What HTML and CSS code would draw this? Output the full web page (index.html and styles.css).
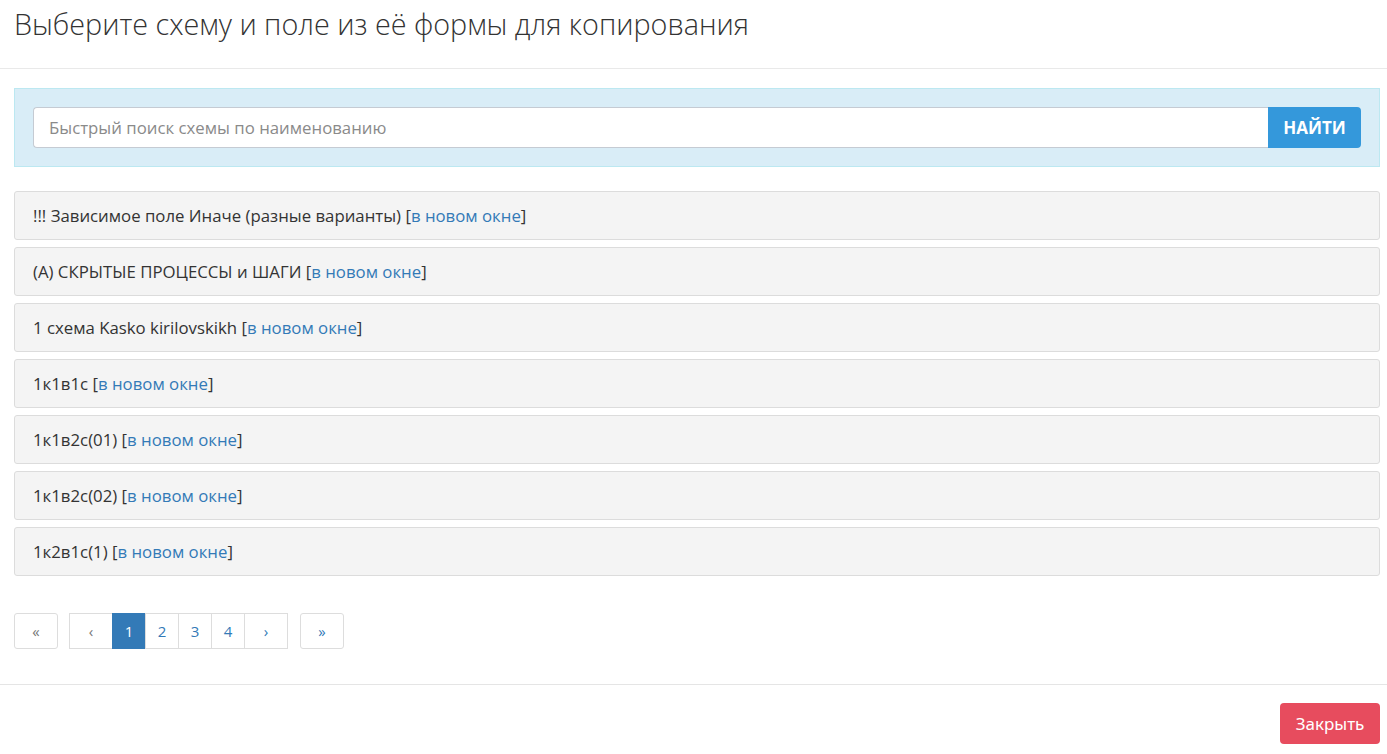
FILE: index.html
```html
<!DOCTYPE html>
<html lang="ru">
<head>
    <meta charset="UTF-8">
    <meta name="viewport" content="width=device-width, initial-scale=1.0">
    <link rel="stylesheet" href="styles.css">
    <title>Копирование поля</title>
</head>
<body>
    <div class="modal-header">
        <h3 class="modal-title">Выберите схему и поле из её формы для копирования</h3>
    </div>
    <div class="modal-body">
        <div class="search-well">
            <div class="input-group">
                <input class="search-input" type="text" placeholder="Быстрый поиск схемы по наименованию">
                <button class="search-btn">НАЙТИ</button>
            </div>
        </div>

        <div class="scheme-list">
            <div class="scheme-item">!!! Зависимое поле Иначе (разные варианты) [<a href="#">в новом окне</a>]</div>
            <div class="scheme-item">(А) СКРЫТЫЕ ПРОЦЕССЫ и ШАГИ [<a href="#">в новом окне</a>]</div>
            <div class="scheme-item">1 схема Kasko kirilovskikh [<a href="#">в новом окне</a>]</div>
            <div class="scheme-item">1к1в1с [<a href="#">в новом окне</a>]</div>
            <div class="scheme-item">1к1в2с(01) [<a href="#">в новом окне</a>]</div>
            <div class="scheme-item">1к1в2с(02) [<a href="#">в новом окне</a>]</div>
            <div class="scheme-item">1к2в1с(1) [<a href="#">в новом окне</a>]</div>
        </div>

        <div class="pager">
            <a class="page-btn single disabled wide" href="#">&laquo;</a>
            <div class="page-group">
                <a class="page-btn disabled wide" href="#">&lsaquo;</a>
                <a class="page-btn active" href="#">1</a>
                <a class="page-btn" href="#">2</a>
                <a class="page-btn" href="#">3</a>
                <a class="page-btn" href="#">4</a>
                <a class="page-btn wide" href="#">&rsaquo;</a>
            </div>
            <a class="page-btn single last wide" href="#">&raquo;</a>
        </div>
    </div>
    <div class="modal-footer">
        <button class="close-btn">Закрыть</button>
    </div>
</body>
</html>
```

FILE: styles.css
```css
body {
    margin: 0;
    padding: 0;
    font-family: 'Open Sans', 'Noto Sans', sans-serif;
    font-size: 16.8px;
    color: #333;
    background-color: #fff;
}

.modal-header {
    height: 69px;
    padding: 0 14px;
    border-bottom: 1px solid #e9e9e9;
    box-sizing: border-box;
}

.modal-title {
    margin: 0;
    padding-top: 4px;
    font-size: 28.75px;
    font-weight: 300;
    line-height: 40px;
    color: #333;
}

.modal-body {
    padding: 19px 7px 35px 14px;
}

.search-well {
    background-color: #d9edf7;
    border: 1px solid #bce8f1;
    padding: 18px;
}

.input-group {
    display: flex;
}

.search-input {
    flex: 1;
    height: 41px;
    box-sizing: border-box;
    border: 1px solid #c5cbd3;
    border-right: none;
    border-radius: 4px 0 0 4px;
    padding: 0 15px;
    font-family: inherit;
    font-size: 16.8px;
    color: #555;
    outline: none;
}

.search-input::placeholder {
    color: #8a8a8a;
}

.search-btn {
    width: 93px;
    height: 41px;
    border: none;
    border-radius: 0 4px 4px 0;
    background-color: #3498db;
    color: #fff;
    font-family: inherit;
    font-size: 17px;
    font-weight: 700;
    cursor: pointer;
}

.scheme-list {
    margin-top: 24px;
    display: flex;
    flex-direction: column;
    gap: 7px;
}

.scheme-item {
    background-color: #f4f4f4;
    border: 1px solid #dcdcdc;
    border-radius: 3px;
    height: 49px;
    box-sizing: border-box;
    padding: 0 18px;
    display: flex;
    align-items: center;
    white-space: pre;
}

.scheme-item a {
    color: #337ab7;
    text-decoration: none;
}

.pager {
    margin-top: 37px;
    display: flex;
    gap: 11px;
}

.page-group {
    display: flex;
}

.page-btn {
    display: flex;
    align-items: center;
    justify-content: center;
    width: 34px;
    height: 36px;
    box-sizing: border-box;
    border: 1px solid #dddddd;
    margin-left: -1px;
    font-size: 15px;
    color: #337ab7;
    text-decoration: none;
    background-color: #fff;
}

.page-btn.wide {
    width: 44px;
}

.page-btn.single {
    margin-left: 0;
    border-radius: 3px;
}

.page-btn.last {
    margin-left: 1px;
}

.page-group .page-btn:first-child {
    margin-left: 0;
}

.page-btn.disabled {
    color: #777;
}

.page-btn.active {
    background-color: #337ab7;
    border-color: #337ab7;
    color: #fff;
}

.modal-footer {
    border-top: 1px solid #e5e5e5;
    padding: 18px 7px 10px 14px;
    display: flex;
    justify-content: flex-end;
}

.close-btn {
    width: 100px;
    height: 41px;
    border: none;
    border-radius: 4px;
    background-color: #e74c5e;
    color: #fff;
    font-family: 'Noto Sans', sans-serif;
    font-size: 17px;
    cursor: pointer;
}
```
